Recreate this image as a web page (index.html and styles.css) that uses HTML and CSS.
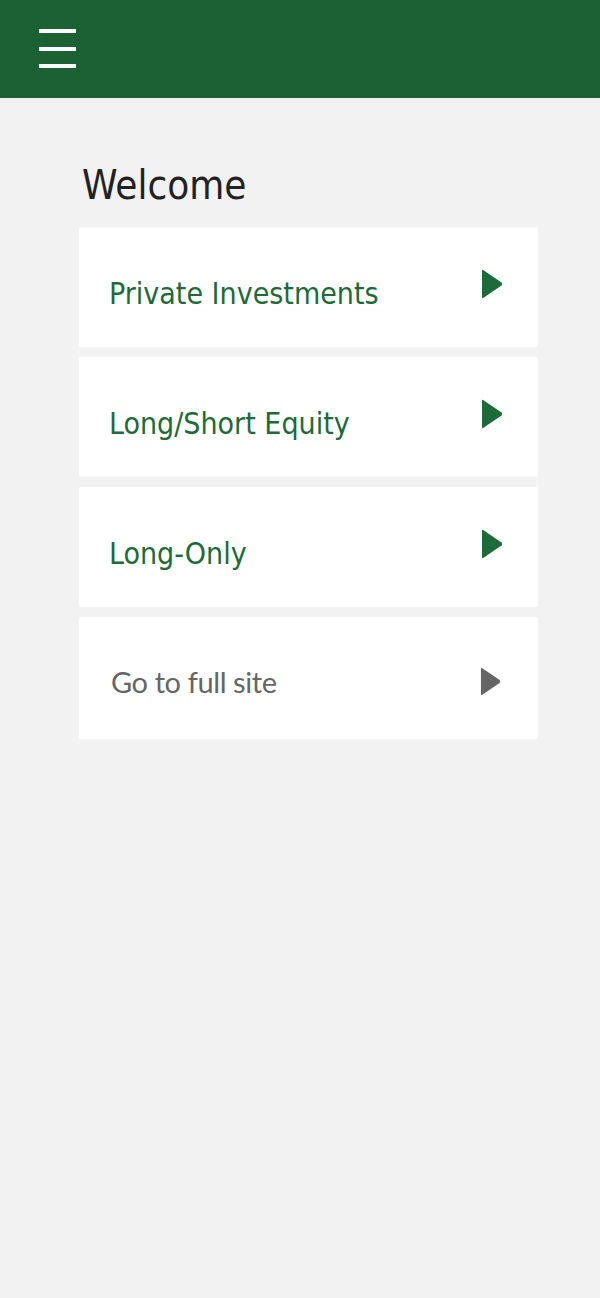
FILE: index.html
```html
<!DOCTYPE html>
<html lang="en">
<head>
<meta charset="utf-8">
<title>Welcome</title>
<link rel="stylesheet" href="styles.css">
</head>
<body>
<header class="topbar">
  <button class="menu-btn" aria-label="Menu">
    <span class="bar"></span><span class="bar"></span><span class="bar"></span>
  </button>
</header>
<main class="content">
  <h1 class="title">Welcome</h1>
  <nav class="cards">
    <a class="card" href="#"><span class="card-label">Private Investments</span>
      <svg class="arrow" viewBox="0 0 22 30"><path d="M2.5 1.2 L20.5 13.4 Q22 15 20.5 16.6 L2.5 28.8 Q1 29.8 1 28 L1 2 Q1 0.2 2.5 1.2 Z"/></svg></a>
    <a class="card" href="#"><span class="card-label">Long/Short Equity</span>
      <svg class="arrow" viewBox="0 0 22 30"><path d="M2.5 1.2 L20.5 13.4 Q22 15 20.5 16.6 L2.5 28.8 Q1 29.8 1 28 L1 2 Q1 0.2 2.5 1.2 Z"/></svg></a>
    <a class="card" href="#"><span class="card-label">Long-Only</span>
      <svg class="arrow" viewBox="0 0 22 30"><path d="M2.5 1.2 L20.5 13.4 Q22 15 20.5 16.6 L2.5 28.8 Q1 29.8 1 28 L1 2 Q1 0.2 2.5 1.2 Z"/></svg></a>
    <a class="card card-full" href="#"><span class="card-label">Go to full site</span>
      <svg class="arrow" viewBox="0 0 22 30"><path d="M2.5 1.2 L20.5 13.4 Q22 15 20.5 16.6 L2.5 28.8 Q1 29.8 1 28 L1 2 Q1 0.2 2.5 1.2 Z"/></svg></a>
  </nav>
</main>
</body>
</html>
```

FILE: styles.css
```css
html, body {
  margin: 0;
  padding: 0;
}
body {
  background: #f2f2f2;
  font-family: "DejaVu Sans Condensed", "DejaVu Sans", sans-serif;
  min-height: 1298px;
}
.topbar {
  height: 98px;
  background: #1b6134;
  display: flex;
  align-items: flex-start;
}
.menu-btn {
  margin: 29px 0 0 39px;
  padding: 0;
  border: 0;
  background: none;
  width: 37px;
  display: flex;
  flex-direction: column;
  gap: 13.5px;
}
.bar {
  display: block;
  height: 4px;
  width: 37px;
  background: #ffffff;
}
.content {
  padding: 0 62px 0 79px;
}
.title {
  margin: 0;
  padding: 63px 0 0 3px;
  height: 66px;
  font-size: 40px;
  line-height: 48px;
  font-weight: normal;
  color: #222222;
}
.cards {
  display: flex;
  flex-direction: column;
  gap: 10px;
}
.card {
  display: flex;
  justify-content: space-between;
  align-items: flex-start;
  height: 120px;
  box-sizing: border-box;
  padding: 0 35px 0 30px;
  background: #ffffff;
  border-radius: 2px;
  text-decoration: none;
  color: #1c6b38;
}
.card-label {
  padding-top: 50px;
  font-size: 30px;
  line-height: 34px;
}
.arrow {
  margin-top: 42px;
  width: 22px;
  height: 30px;
  fill: #1d6b38;
}
.card-full {
  height: 122px;
  padding-left: 32px;
  padding-right: 37px;
  color: #666666;
}
.card-full .card-label {
  font-family: Lato, "Open Sans", sans-serif;
  font-size: 29px;
  letter-spacing: -0.4px;
  line-height: 36px;
  padding-top: 47px;
}
.card-full .arrow {
  margin-top: 49px;
  width: 21px;
  height: 31px;
  fill: #666666;
}
```
